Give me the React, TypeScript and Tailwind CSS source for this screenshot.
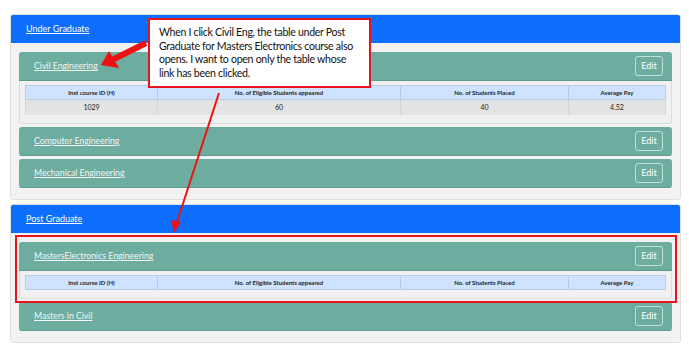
import React from 'react';

type Row = { id: string; eligible: string; placed: string; pay: string };

const headers = ['Inst course ID (H)', 'No. of Eligible Students appeared', 'No. of Students Placed', 'Average Pay'];
const colW = ['w-[132px]', 'w-[243px]', 'w-[168px]', ''];

const ResultTable = ({ rows }: { rows: Row[] }) => (
  <table className="w-full border-collapse text-[7px] text-[#222]">
    <thead>
      <tr className="bg-[#cfe2ff] h-[14px]">
        {headers.map((h, i) => (
          <th key={h} className={`${colW[i]} border border-[#b8cce6] font-bold text-[6px] text-center p-0`}>{h}</th>
        ))}
      </tr>
    </thead>
    <tbody>
      {rows.map(r => (
        <tr key={r.id} className="bg-[#e3e3e3] h-[15px]">
          <td className="border-x border-[#d6d6d6] text-center p-0">{r.id}</td>
          <td className="border-x border-[#d6d6d6] text-center p-0">{r.eligible}</td>
          <td className="border-x border-[#d6d6d6] text-center p-0">{r.placed}</td>
          <td className="border-x border-[#d6d6d6] text-center p-0">{r.pay}</td>
        </tr>
      ))}
    </tbody>
  </table>
);

const Course = ({ name, rows }: { name: string; rows?: Row[] }) => (
  <div className="rounded-[3px] overflow-hidden">
    <div className="h-[29px] bg-[#6dad9f] border-b border-[#5d9a8c] flex items-center justify-between pl-[15px] pr-[9px]">
      <a className="text-[8.7px] text-[#f4f4f4] underline">{name}</a>
      <button className="w-[28px] h-[20px] rounded-[3px] border border-white/60 text-white text-[9px]">Edit</button>
    </div>
    {rows && (
      <div className="bg-[#f0f0f0] border-x border-b border-[#dcdcdc] rounded-b-[3px] px-[5px] pt-[4px] pb-[8px]">
        <ResultTable rows={rows} />
      </div>
    )}
  </div>
);

const Section = ({ title, children }: { title: string; children: React.ReactNode }) => (
  <div className="rounded-[3px] border border-[#dedede] overflow-hidden">
    <div className="h-[28px] bg-[#0d6efd] flex items-center px-[15px]">
      <a className="text-[9px] text-white underline">{title}</a>
    </div>
    <div className="bg-[#f2f2f2] px-[8px] pt-[9px] pb-[11px] flex flex-col gap-[3px]">{children}</div>
  </div>
);

export default function App() {
  return (
    <div className="relative w-[689px] h-[348px] overflow-hidden bg-white pt-[14px] pl-[10px] pr-[8px]" style={{ fontFamily: 'Lato, "Noto Sans", sans-serif' }}>
      <div className="flex flex-col gap-[4px]">
        <Section title="Under Graduate">
          <Course name="Civil Engineering" rows={[{ id: '1029', eligible: '60', placed: '40', pay: '4.52' }]} />
          <Course name="Computer Engineering" />
          <Course name="Mechanical Engineering" />
        </Section>
        <Section title="Post Graduate">
          <Course name="MastersElectronics Engineering" rows={[]} />
          <Course name="Masters in Civil" />
        </Section>
      </div>

      {/* highlight around the second open table */}
      <div className="absolute left-[15px] top-[235px] w-[662px] h-[68px] border-2 border-[#e8131b]" />

      {/* callout */}
      <div className="absolute left-[148px] top-[18px] w-[223px] h-[70px] bg-white border-2 border-[#e8131b] pl-[9px] pt-[6px] text-[10.6px] leading-[13.5px] tracking-[-0.3px] whitespace-nowrap text-[#111]">
        When I click Civil Eng, the table under Post<br />
        Graduate for Masters Electronics course also<br />
        opens. I want to open only the table whose<br />
        link has been clicked.
      </div>

      <svg className="absolute inset-0 pointer-events-none" width="689" height="348">
        <line x1="146" y1="43" x2="112" y2="60" stroke="#ee1111" strokeWidth="6" />
        <polygon points="101,65 109,51 119,68" fill="#ee1111" />
        <line x1="219" y1="93" x2="177" y2="222" stroke="#ee1111" strokeWidth="2" />
        <polygon points="174,233 171,220 181,222" fill="#ee1111" />
      </svg>
    </div>
  );
}
